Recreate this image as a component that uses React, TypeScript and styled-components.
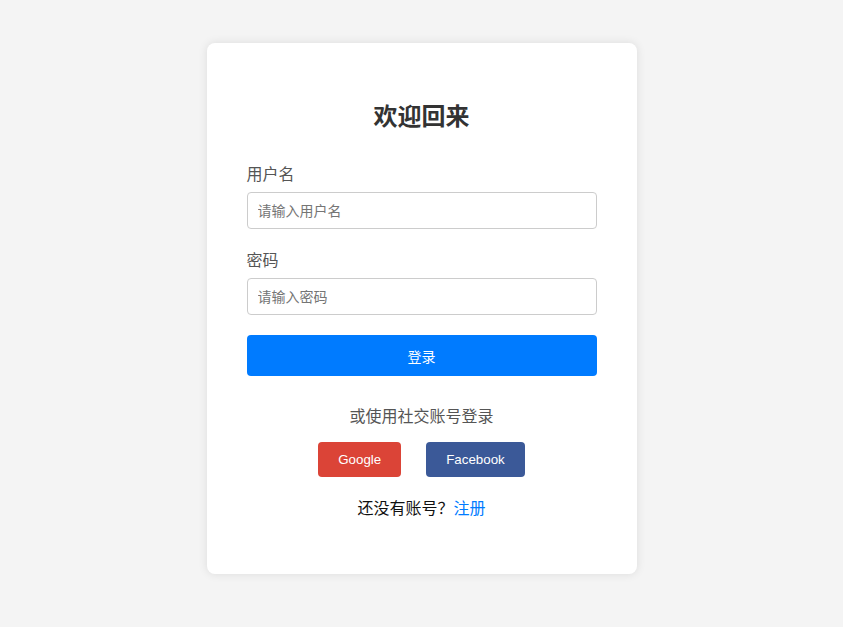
import React from "react";
import styled, { createGlobalStyle } from "styled-components";

const GlobalStyle = createGlobalStyle`
  * { box-sizing: border-box; }
  html, body {
    margin: 0;
    padding: 0;
    background: #f4f4f4;
    font-family: "Liberation Sans", Arial, "Noto Sans CJK SC", sans-serif;
  }
`;

const Page = styled.div`
  display: flex;
  justify-content: center;
  align-items: flex-start;
  padding-top: 43px;
  min-height: 627px;
`;

const Card = styled.div`
  width: 430px;
  background: #fff;
  border-radius: 8px;
  box-shadow: 0 0 10px rgba(0, 0, 0, 0.1);
  padding: 40px 40px 55px;
  display: flex;
  flex-direction: column;
`;

const Title = styled.h2`
  margin: 20px 0 34px;
  font-size: 24px;
  line-height: 28px;
  font-weight: 700;
  color: #333;
  text-align: center;
`;

const Group = styled.div`
  display: flex;
  flex-direction: column;
  margin-bottom: 20px;
  & + & {
    margin-top: 2px;
  }
`;

const Label = styled.label`
  font-size: 16px;
  line-height: 20px;
  color: #555;
  margin-bottom: 7px;
`;

const Input = styled.input`
  width: 100%;
  height: 37px;
  padding: 0 10px;
  border: 1px solid #ccc;
  border-radius: 4px;
  font-size: 14px;
  font-family: inherit;
  color: #333;
  outline: none;
  &::placeholder {
    color: #757575;
  }
`;

const SubmitButton = styled.button`
  width: 100%;
  height: 41px;
  border: none;
  border-radius: 4px;
  background: #007bff;
  color: #fff;
  font-size: 14px;
  font-family: inherit;
  cursor: pointer;
`;

const SocialText = styled.p`
  margin: 31px 0 15px;
  font-size: 16px;
  line-height: 20px;
  color: #555;
  text-align: center;
`;

const SocialRow = styled.div`
  display: flex;
  justify-content: center;
  gap: 25px;
`;

const SocialButton = styled.button<{ $bg: string }>`
  height: 35px;
  padding: 0 20px;
  border: none;
  border-radius: 4px;
  background: ${(p) => p.$bg};
  color: #fff;
  font-size: 13.333px;
  font-family: "Liberation Sans", Arial, sans-serif;
  cursor: pointer;
`;

const RegisterText = styled.p`
  margin: 22px 0 0;
  font-size: 16px;
  line-height: 20px;
  color: #111;
  text-align: center;
`;

const Link = styled.a`
  color: #007bff;
  text-decoration: none;
`;

export default function App() {
  return (
    <>
      <GlobalStyle />
      <Page>
        <Card>
          <Title>欢迎回来</Title>
          <Group>
            <Label htmlFor="username">用户名</Label>
            <Input id="username" placeholder="请输入用户名" />
          </Group>
          <Group>
            <Label htmlFor="password">密码</Label>
            <Input id="password" type="password" placeholder="请输入密码" />
          </Group>
          <SubmitButton>登录</SubmitButton>
          <SocialText>或使用社交账号登录</SocialText>
          <SocialRow>
            <SocialButton $bg="#db4437">Google</SocialButton>
            <SocialButton $bg="#3b5998">Facebook</SocialButton>
          </SocialRow>
          <RegisterText>
            还没有账号？<Link href="#">注册</Link>
          </RegisterText>
        </Card>
      </Page>
    </>
  );
}
